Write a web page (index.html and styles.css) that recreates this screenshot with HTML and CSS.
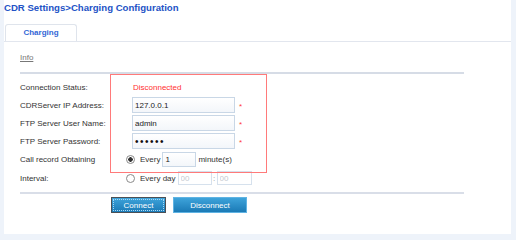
FILE: index.html
```html
<!DOCTYPE html>
<html lang="en">
<head>
    <meta charset="UTF-8">
    <meta name="viewport" content="width=device-width, initial-scale=1.0">
    <title>CDR Settings</title>
    <link rel="stylesheet" href="styles.css">
</head>
<body>
<div class="page">
    <h1 class="title">CDR Settings&gt;Charging Configuration</h1>

    <div class="tabs">
        <div class="tab">Charging</div>
    </div>

    <div class="content">
        <div class="sec_title"><span>Info</span></div>

        <div class="form">
            <div class="row">
                <div class="lbl">Connection Status:</div>
                <div class="val"><span class="status">Disconnected</span></div>
            </div>
            <div class="row">
                <div class="lbl">CDRServer IP Address:</div>
                <div class="val"><input class="txt" type="text" value="127.0.0.1"><span class="req">*</span></div>
            </div>
            <div class="row">
                <div class="lbl">FTP Server User Name:</div>
                <div class="val"><input class="txt" type="text" value="admin"><span class="req">*</span></div>
            </div>
            <div class="row">
                <div class="lbl">FTP Server Password:</div>
                <div class="val"><input class="txt pw" type="password" value="123456"><span class="req">*</span></div>
            </div>
            <div class="row row_every">
                <div class="lbl">Call record Obtaining</div>
                <div class="val">
                    <input class="rd" type="radio" name="iv" checked>
                    <span class="rd_txt">Every</span>
                    <input class="txt small" type="text" value="1">
                    <span class="unit">minute(s)</span>
                </div>
            </div>
            <div class="row">
                <div class="lbl">Interval:</div>
                <div class="val">
                    <input class="rd" type="radio" name="iv">
                    <span class="rd_txt">Every day</span>
                    <input class="txt small off" type="text" placeholder="00" disabled>
                    <span class="colon">:</span>
                    <input class="txt small off" type="text" placeholder="00" disabled>
                </div>
            </div>

            <!-- highlight frame over the value column -->
            <div class="hl_box"></div>
        </div>

        <div class="btns">
            <button class="btn btn_focus" type="button">Connect</button>
            <button class="btn" type="button">Disconnect</button>
        </div>
    </div>
</div>
</body>
</html>
```

FILE: styles.css
```css
body {
    margin: 0;
    background: #eef3fa;
    font-family: "Liberation Sans", Arial, sans-serif;
    font-size: 8px;
    color: #333;
}

.page {
    width: 507px;
    height: 234px;
    margin-left: 4px;
    background: #fff;
    overflow: hidden;
}

.title {
    margin: 0;
    padding-top: 2px;
    font-size: 9.6px;
    line-height: 11px;
    font-weight: bold;
    color: #2353c6;
}

.tabs {
    margin-top: 11px;
    height: 17px;
    border-bottom: 1px solid #e2e6ee;
    display: flex;
}
.tab {
    width: 70px;
    height: 16px;
    margin-left: 1px;
    border: 1px solid #dfe4ec;
    border-bottom: none;
    border-radius: 3px 3px 0 0;
    background: #fff;
    text-align: center;
    line-height: 15px;
    font-weight: bold;
    color: #3366d6;
}

.content {
    padding-left: 16px;
}

.sec_title {
    margin-top: 11px;
    line-height: 10px;
    color: #777;
}
.sec_title span {
    text-decoration: underline;
}

.form {
    width: 444px;
    margin-top: 9px;
    padding-top: 4px;
    border-top: 2px solid #d6dce6;
    border-bottom: 2px solid #d9dee8;
    padding-bottom: 5px;
    position: relative;
}

.row {
    height: 18px;
    display: flex;
    align-items: center;
}
.row_every {
    height: 19px;
}
.lbl {
    width: 112px;
    color: #333;
}
.val {
    display: flex;
    align-items: center;
}

.status {
    margin-left: 1px;
    color: #ff3030;
}

.txt {
    box-sizing: border-box;
    width: 103px;
    height: 16px;
    margin: 0;
    padding: 0 2px;
    border: 1px solid #c9d7e6;
    background: linear-gradient(#fff, #f3f6fa);
    font-family: "Liberation Sans", Arial, sans-serif;
    font-size: 8px;
    color: #222;
    outline: none;
}
.pw {
    font-size: 10px;
    letter-spacing: 1.5px;
    color: #111;
}
.small {
    width: 34px;
    height: 15px;
}
.off {
    height: 14px;
    border-color: #d6e1ed;
    background: #fff;
}
.off::placeholder {
    color: #c4c9d0;
}
.off + .colon + .off {
    width: 35px;
}

.req {
    margin-left: 4px;
    margin-top: 3px;
    line-height: 8px;
    font-size: 8px;
    color: #ff3b3b;
}

.rd {
    appearance: none;
    box-sizing: border-box;
    width: 9px;
    height: 9px;
    margin: 0 5px 0 -6px;
    border: 1px solid #8a8a8a;
    border-radius: 50%;
    background: #fff;
}
.rd:checked {
    background: radial-gradient(circle, #333 0 2px, #fff 2.5px);
}
.rd_txt {
    margin-right: 2px;
}
.unit {
    margin-left: 2px;
}
.colon {
    width: 5px;
    text-align: center;
    color: #999;
}

.hl_box {
    position: absolute;
    left: 90px;
    top: 0;
    width: 155px;
    height: 97px;
    border: 1px solid #ff7a7a;
}

.btns {
    display: flex;
    gap: 7px;
    margin-top: 3px;
    padding-left: 91px;
}
.btn {
    height: 16px;
    padding: 0;
    border: 1px solid #5fb3e3;
    background: linear-gradient(#3ea3da, #1b7ab6);
    color: #fff;
    font-family: "Liberation Sans", Arial, sans-serif;
    font-size: 8px;
    width: 74px;
}
.btn_focus {
    width: 55px;
    border-color: #4b4f55;
    outline: 1px dotted #a8d8f5;
    outline-offset: -3px;
}
```
